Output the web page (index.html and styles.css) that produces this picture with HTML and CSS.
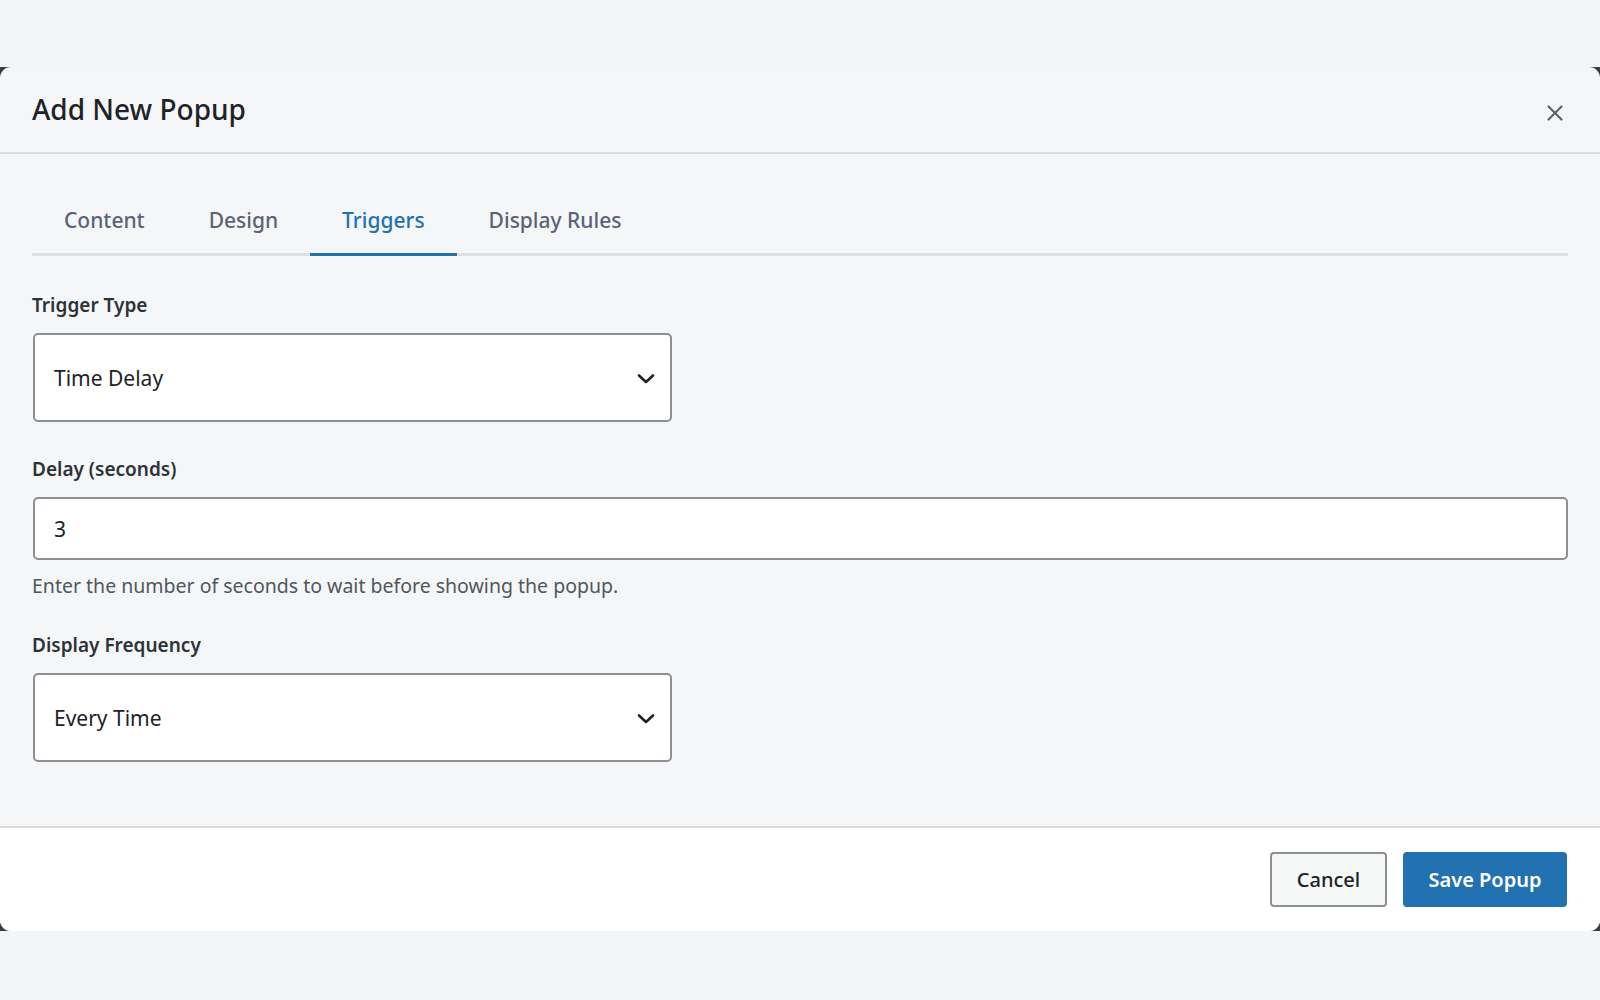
FILE: index.html
```html
<!DOCTYPE html>
<html>
	<head>
		<meta charset="UTF-8">
		<title>Add New Popup</title>
		<link rel="stylesheet" href="styles.css">
	</head>
	<body>
		<div class="backdrop">
			<div class="modal">
				<div class="modal-header">
					<h2>Add New Popup</h2>
					<button class="close" title="Close">
						<svg width="20" height="20" viewBox="0 0 20 20"><path d="M3.5 3.5 L16.5 16.5 M16.5 3.5 L3.5 16.5" stroke="#5f6368" stroke-width="2.2" stroke-linecap="round"/></svg>
					</button>
				</div>

				<div class="modal-body">
					<ul class="tabs">
						<li class="tab">Content</li>
						<li class="tab">Design</li>
						<li class="tab active">Triggers</li>
						<li class="tab">Display Rules</li>
					</ul>

					<div class="field">
						<label for="triggerType">Trigger Type</label>
						<div class="select-wrap">
							<select id="triggerType">
								<option>Time Delay</option>
								<option>Exit Intent</option>
								<option>Scroll Depth</option>
							</select>
							<svg class="chevron" width="18" height="12" viewBox="0 0 18 12"><path d="M2 2.5 L9 9 L16 2.5" fill="none" stroke="#1d2327" stroke-width="2.6" stroke-linecap="round" stroke-linejoin="round"/></svg>
						</div>
					</div>

					<div class="field">
						<label for="delay">Delay (seconds)</label>
						<input id="delay" class="text-input" type="text" value="3">
						<p class="help">Enter the number of seconds to wait before showing the popup.</p>
					</div>

					<div class="field">
						<label for="frequency">Display Frequency</label>
						<div class="select-wrap">
							<select id="frequency">
								<option>Every Time</option>
								<option>Once per Session</option>
								<option>Once per Day</option>
							</select>
							<svg class="chevron" width="18" height="12" viewBox="0 0 18 12"><path d="M2 2.5 L9 9 L16 2.5" fill="none" stroke="#1d2327" stroke-width="2.6" stroke-linecap="round" stroke-linejoin="round"/></svg>
						</div>
					</div>
				</div>

				<div class="modal-footer">
					<button class="btn btn-secondary">Cancel</button>
					<button class="btn btn-primary">Save Popup</button>
				</div>
			</div>
		</div>
	</body>
</html>
```

FILE: styles.css
```css
*{margin: 0;padding: 0;box-sizing: border-box;}
body{
	background: #f4f5f8;
	font-family: "Noto Sans", "Open Sans", sans-serif;
	color: #1d2327;
	padding-top: 67px;
}
.backdrop{
	background: #3c3c3c;
}
.modal{
	background: #f5f6f7;
	border-radius: 11px;
	overflow: hidden;
}
.modal-header{
	display: flex;
	align-items: center;
	justify-content: space-between;
	height: 87px;
	padding: 0 30px 0 32px;
	border-bottom: 2px solid #dcdcde;
}
.modal-header h2{
	font-size: 28px;
	font-weight: 500;
	color: #1d2327;
	margin-top: -2px;
}
.close{
	border: none;
	background: none;
	width: 30px;
	height: 30px;
	display: flex;
	align-items: center;
	justify-content: center;
	margin-top: 6px;
	cursor: pointer;
}
.modal-body{
	padding: 32px 32px 64px;
}
.tabs{
	list-style: none;
	display: flex;
	border-bottom: 3px solid #e0e0e0;
	margin-bottom: 37px;
}
.tab{
	padding: 20px 32px 19px;
	font-size: 21px;
	line-height: 28px;
	font-weight: 500;
	color: #5a6378;
	margin-bottom: -3px;
	border-bottom: 3px solid transparent;
	cursor: pointer;
}
.tab.active{
	color: #2271b1;
	border-bottom-color: #2271b1;
}
.field{
	margin-bottom: 35px;
}
.field:last-child{
	margin-bottom: 0;
}
.field label{
	display: block;
	font-size: 19px;
	font-weight: 600;
	line-height: 25px;
	margin-bottom: 15px;
	color: #2c3338;
}
.select-wrap{
	position: relative;
	width: 639px;
	margin-left: 1px;
}
.select-wrap select{
	appearance: none;
	-webkit-appearance: none;
	width: 100%;
	height: 89px;
	padding: 0 60px 0 19px;
	border: 2px solid #8c8f94;
	border-radius: 5px;
	background: #fff;
	font-family: inherit;
	font-size: 21px;
	color: #1d2327;
	outline: none;
}
.chevron{
	position: absolute;
	right: 17px;
	top: 40px;
	pointer-events: none;
}
.text-input{
	display: block;
	width: calc(100% - 1px);
	margin-left: 1px;
	height: 63px;
	padding: 0 19px;
	border: 2px solid #8c8f94;
	border-radius: 5px;
	background: #fff;
	font-family: inherit;
	font-size: 21px;
	color: #1d2327;
	outline: none;
}
.help{
	margin-top: 14px;
	margin-bottom: 1px;
	font-size: 19.5px;
	line-height: 24px;
	color: #50575e;
}
.modal-footer{
	background: #fff;
	border-top: 2px solid #dcdcde;
	display: flex;
	justify-content: flex-end;
	gap: 16px;
	padding: 24px 33px 24px;
}
.btn{
	height: 55px;
	border-radius: 4px;
	font-family: inherit;
	font-size: 20px;
	font-weight: 500;
	cursor: pointer;
}
.btn-secondary{
	width: 117px;
	background: #f6f7f7;
	border: 2px solid #8c8f94;
	color: #1d2327;
}
.btn-primary{
	width: 164px;
	background: #2271b1;
	border: 2px solid #2271b1;
	color: #fff;
	font-weight: 600;
}
```
